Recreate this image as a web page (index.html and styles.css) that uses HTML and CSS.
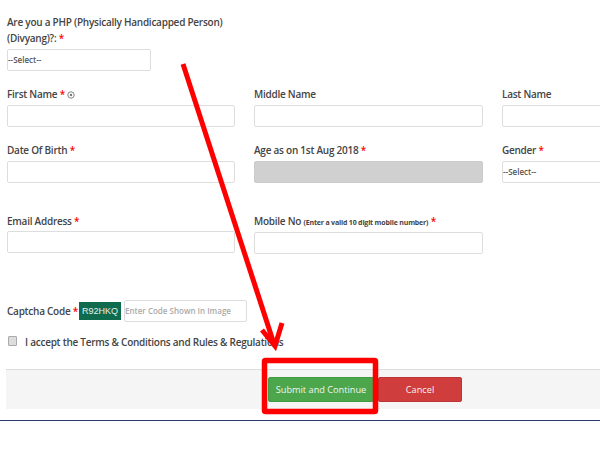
FILE: index.html
```html
<!DOCTYPE html>
<html lang="en">
<head>
<meta charset="utf-8">
<title>Registration</title>
<link rel="stylesheet" href="styles.css">
</head>
<body>
<div class="page">
  <form class="form">
    <div class="php">
      <label class="label php-label">Are you a PHP (Physically Handicapped Person) (Divyang)?: <span class="req">*</span></label>
      <div class="select select-short">--Select--</div>
    </div>
    <div class="row row-name">
      <div class="field"><label class="label">First Name <span class="req">*</span> <svg class="info" viewBox="0 0 8 8" width="8" height="8"><circle cx="4" cy="4" r="3.2" fill="none" stroke="#666" stroke-width=".8"/><circle cx="4" cy="4" r="1.2" fill="#777"/></svg></label><div class="input"></div></div>
      <div class="field"><label class="label">Middle Name</label><div class="input"></div></div>
      <div class="field"><label class="label">Last Name</label><div class="input"></div></div>
    </div>
    <div class="row row-dob">
      <div class="field"><label class="label">Date Of Birth <span class="req">*</span></label><div class="input"></div></div>
      <div class="field"><label class="label">Age as on 1st Aug 2018 <span class="req">*</span></label><div class="input input-disabled"></div></div>
      <div class="field"><label class="label">Gender <span class="req">*</span></label><div class="select">--Select--</div></div>
    </div>
    <div class="row row-email">
      <div class="field"><label class="label">Email Address <span class="req">*</span></label><div class="input"></div></div>
      <div class="field"><label class="label">Mobile No <small class="hint">(Enter a valid 10 digit mobile number)</small> <span class="req">*</span></label><div class="input"></div></div>
    </div>
    <div class="captcha">
      <label class="label captcha-label">Captcha Code <span class="req">*</span></label>
      <span class="captcha-code">R92HKQ</span>
      <div class="input captcha-input">Enter Code Shown In Image</div>
    </div>
    <div class="terms">
      <span class="checkbox"></span>
      <label class="label terms-label">I accept the Terms &amp; Conditions and Rules &amp; Regulations</label>
    </div>
    <div class="actions">
      <button type="button" class="btn btn-green">Submit and Continue</button>
      <button type="button" class="btn btn-red">Cancel</button>
    </div>
  </form>
  <div class="rule"></div>
  <svg class="overlay" viewBox="0 0 600 450" width="600" height="450">
    <path d="M183 64 L274 344" fill="none" stroke="#f00" stroke-width="5"/>
    <path d="M262 330 L275 346 L282 323" fill="none" stroke="#f00" stroke-width="5" stroke-linejoin="miter"/>
    <rect x="264.5" y="360.5" width="111" height="51" fill="none" stroke="#f00" stroke-width="5.5" rx="1"/>
  </svg>
</div>
</body>
</html>
```
FILE: styles.css
```css
* { box-sizing: border-box; }
html, body { margin: 0; padding: 0; }
body { background: #fff; font-family: "Open Sans", "Liberation Sans", sans-serif; color: #444; overflow: hidden; }
.page { position: relative; width: 600px; height: 450px; overflow: hidden; }
.form { padding-top: 15px; }
.label { display: block; font-size: 10px; letter-spacing: -0.25px; font-weight: 600; line-height: 15.5px; color: #444; white-space: nowrap; padding-top: 1px; }
.req { color: #f00; }
.info { vertical-align: -1px; }
.hint { font-size: 7px; font-weight: 700; letter-spacing: -0.17px; }
.php { padding-left: 7px; }
.php-label { width: 220px; white-space: normal; padding-top: 0; margin-bottom: 3px; }
.select, .input { height: 22px; border: 1px solid #ddd; border-radius: 2px; background: #fff; }
.select { font-size: 8px; font-weight: 600; line-height: 20px; color: #555; padding-left: 0; }
.select-short { width: 144px; }
.row { display: grid; grid-template-columns: 228px 229px 228px; column-gap: 19px; padding-left: 7px; }
.row-name { margin-top: 15px; }
.row-dob { margin-top: 16px; }
.row-email { margin-top: 29px; }
.field .label { margin-bottom: 2px; }
.row-dob .field .label { padding-top: 0; margin-bottom: 3px; }
.row-email .field .label { padding-top: 2px; margin-bottom: 1px; }
.input-disabled { background: #d0d0d0; border-color: #ccc; }
.captcha { display: flex; align-items: center; margin-top: 46px; padding-left: 7px; height: 22px; }
.captcha-label { margin-right: 1px; padding-top: 3px; }
.captcha-code { width: 42px; height: 18px; background: #0e6b4e; color: #e8f0ec; font-family: "Liberation Sans", sans-serif; font-size: 9px; line-height: 18px; text-align: center; margin-right: 3px; }
.captcha-input { width: 123px; font-size: 8px; font-weight: 600; line-height: 20px; color: #aaa; padding-left: 0; }
.terms { display: flex; align-items: flex-start; margin-top: 11px; padding-left: 8px; height: 16px; }
.checkbox { width: 9px; height: 10px; margin-top: 3px; border: 1px solid #aaa; border-radius: 1px; background: #ddd; margin-right: 8px; }
.terms-label { margin-top: 1px; }
.actions { display: flex; gap: 4px; margin: 20px 0 0 6px; height: 40px; background: #f5f5f5; border-top: 1px solid #ddd; padding: 7px 0 0 262px; }
.btn { height: 25px; border: 1px solid transparent; border-radius: 2px; color: #f4f4f4; font-family: inherit; font-size: 9.2px; font-weight: 400; padding: 0; }
.btn-green { width: 106px; background: #4ca64c; border-color: #429a42; }
.btn-red { width: 84px; background: #cf3d3d; border-color: #bf3535; }
.rule { height: 1px; margin-top: 11px; background: #2a3a6a; }
.overlay { position: absolute; left: 0; top: 0; pointer-events: none; }
```
